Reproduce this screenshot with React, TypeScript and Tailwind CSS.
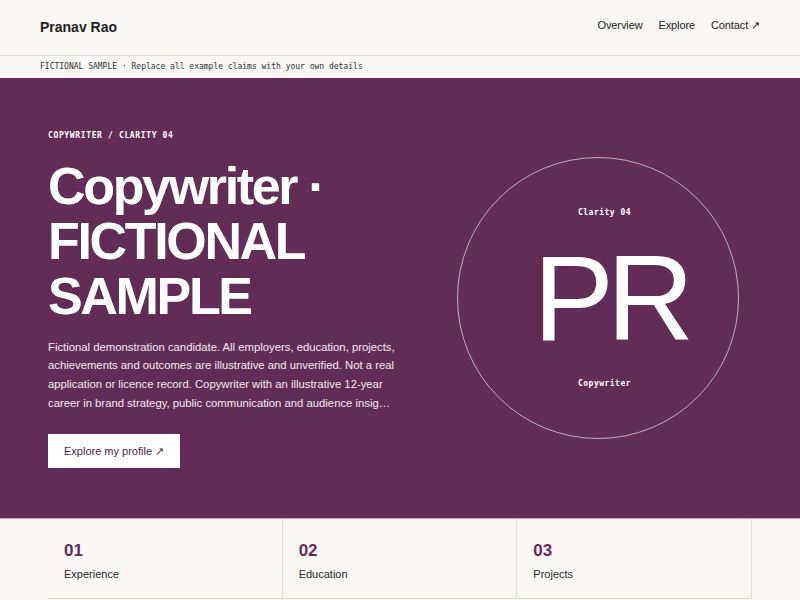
const sans = "font-['Liberation_Sans','Helvetica_Neue',Arial,sans-serif]";
const mono = "font-['DejaVu_Sans_Mono','Liberation_Mono',monospace]";

const NAV = ['Overview', 'Explore', 'Contact ↗'];

const SECTIONS = [
  { n: '01', label: 'Experience' },
  { n: '02', label: 'Education' },
  { n: '03', label: 'Projects' },
];

export default function App() {
  return (
    <div className={`${sans} min-h-screen bg-[#f8f7f3] text-[#1f1f1f]`}>
      <header className="h-[56px] flex items-center justify-between px-10 border-b border-[#e2e0da]">
        <span className="text-[14px] font-bold leading-[17px]">Pranav Rao</span>
        <nav className="flex items-center gap-4 mb-[5px] text-[11px] leading-[13px] text-[#222] tracking-[-0.01em]">
          {NAV.map((item) => (
            <a key={item} className="cursor-pointer">
              {item}
            </a>
          ))}
        </nav>
      </header>

      <div className={`${mono} h-[22px] flex items-center px-10 text-[8px] text-[#333]`}>
        FICTIONAL SAMPLE · Replace all example claims with your own details
      </div>

      <section className="h-[441px] bg-[#612d57] border-b border-[#c9a9bf] px-12 grid grid-cols-[minmax(0,1fr)_308px] gap-9 items-center">
        <div className="text-white pt-[2px]">
          <p className={`${mono} text-[8px] leading-[12px] font-bold tracking-[0.08em]`}>
            COPYWRITER / CLARITY 04
          </p>
          <h1 className="mt-[17px] text-[52px] leading-[55px] font-bold tracking-[-0.045em]">
            Copywriter ·<br />
            FICTIONAL
            <br />
            SAMPLE
          </h1>
          <p className="mt-[14px] text-[11.3px] leading-[18.7px] text-white/90 line-clamp-4 max-w-[347px]">
            Fictional demonstration candidate. All employers, education, projects, achievements and
            outcomes are illustrative and unverified. Not a real application or licence record.
            Copywriter with an illustrative 12-year career in brand strategy, public communication
            and audience insight across agencies and in-house teams.
          </p>
          <button className="mt-[22px] h-[34px] px-4 bg-white text-[#4e2546] text-[11px]">
            Explore my profile ↗
          </button>
        </div>

        <div className="flex justify-center">
          <div className="w-[282px] h-[282px] rounded-full border border-white/60 flex flex-col items-center justify-center text-white">
            <span className={`${mono} pl-[13px] text-[8px] leading-[12px] font-bold tracking-[0.06em]`}>
              Clarity 04
            </span>
            <span className="my-[19px] pl-[24px] text-[121px] leading-none tracking-[-0.06em]">PR</span>
            <span className={`${mono} pl-[13px] text-[8px] leading-[12px] font-bold tracking-[0.06em]`}>
              Copywriter
            </span>
          </div>
        </div>
      </section>

      <section className="px-12 grid grid-cols-3">
        {SECTIONS.map((s) => (
          <div key={s.n} className="border-r border-b border-[#dfddd7] pl-4 pt-[22px] pb-[14px]">
            <div className="text-[17px] leading-[20px] font-bold text-[#612d57]">{s.n}</div>
            <div className="mt-[3px] text-[11px] leading-[20px] text-[#2a2a2a]">{s.label}</div>
          </div>
        ))}
      </section>
    </div>
  );
}
